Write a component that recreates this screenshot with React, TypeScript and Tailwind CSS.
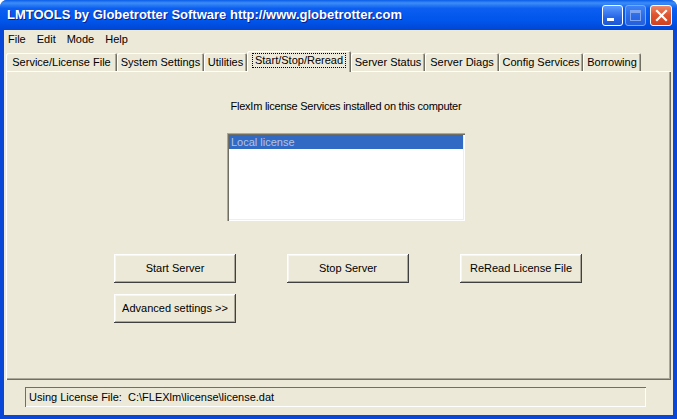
import React from "react";

const tabs = [
  { label: "Service/License File", w: "w-[111px]" },
  { label: "System Settings", w: "w-[87px]" },
  { label: "Utilities", w: "w-[43px]" },
  { label: "Start/Stop/Reread", w: "w-[104px]", active: true },
  { label: "Server Status", w: "w-[74px]" },
  { label: "Server Diags", w: "w-[74px]" },
  { label: "Config Services", w: "w-[84px]" },
  { label: "Borrowing", w: "w-[58px]" },
];

const btn =
  "w-[122px] h-[29px] flex items-center justify-center bg-[#ece9d8] text-[11px] text-black shadow-[inset_-1px_-1px_#404040,inset_1px_1px_#ffffff,inset_-2px_-2px_#aca899,inset_2px_2px_#f6f5ef]";

function TitleButtons() {
  return (
    <div className="flex items-center gap-[2px] mr-[5px]">
      <div className="w-[21px] h-[21px] rounded-[3px] border border-white bg-[linear-gradient(180deg,#5b9bff,#2766e6_60%,#1e57d6)] relative">
        <div className="absolute left-[4px] bottom-[4px] w-[7px] h-[3px] bg-white" />
      </div>
      <div className="w-[21px] h-[21px] rounded-[3px] border border-[#7fa6f0] bg-[linear-gradient(180deg,#3f83f5,#2a68e6_60%,#2560dc)] relative">
        <div className="absolute left-[4px] top-[4px] w-[11px] h-[11px] border border-[#7fa6f0] border-t-[3px]" />
      </div>
      <div className="w-[22px] h-[21px] ml-[2px] rounded-[3px] border border-white bg-[linear-gradient(180deg,#ee8a6a,#e0552f_45%,#cf4221)] flex items-center justify-center">
        <svg width="13" height="13" viewBox="0 0 13 13">
          <path d="M2 2 L11 11 M11 2 L2 11" stroke="white" strokeWidth="2.2" strokeLinecap="square" />
        </svg>
      </div>
    </div>
  );
}

export default function App() {
  return (
    <div
      className="w-[677px] h-[419px] flex flex-col bg-[#0847d8] rounded-t-[7px] overflow-hidden"
      style={{ fontFamily: '"Liberation Sans", Arial, sans-serif' }}
    >
      <div className="h-[30px] flex items-center justify-between bg-[linear-gradient(180deg,#0a5ee8_0%,#3d8cf7_10%,#0b5ef0_28%,#0055ea_70%,#0046d4_100%)]">
        <span className="ml-[7px] text-white font-bold text-[13px] [text-shadow:1px_1px_#0a1f8f]">
          LMTOOLS by Globetrotter Software http://www.globetrotter.com
        </span>
        <TitleButtons />
      </div>

      <div className="flex-1 mx-[4px] mb-[4px] bg-[#ece9d8] flex flex-col text-[11px] text-black">
        {/* menu */}
        <div className="h-[18px] flex items-center">
          {["File", "Edit", "Mode", "Help"].map((m) => (
            <span key={m} className="px-[4px] mr-[3px]">
              {m}
            </span>
          ))}
        </div>

        {/* tabs */}
        <div className="h-[23px] flex items-end pl-[2px] relative z-10">
          {tabs.map((t) =>
            t.active ? (
              <div
                key={t.label}
                className={`${t.w} h-[21px] -mb-[1px] flex items-start justify-center pt-[3px] bg-[#ece9d8] rounded-t-[2px] shadow-[inset_1px_1px_#ffffff,inset_-1px_0_#716f64,inset_-2px_0_#aca899]`}
              >
                <span className="px-[2px] leading-[13px] outline-1 outline-dotted outline-black">{t.label}</span>
              </div>
            ) : (
              <div
                key={t.label}
                className={`${t.w} h-[18px] flex items-center justify-center rounded-t-[2px] shadow-[inset_1px_1px_#ffffff,inset_-1px_0_#716f64,inset_-2px_0_#aca899]`}
              >
                {t.label}
              </div>
            )
          )}
        </div>

        {/* panel */}
        <div className="ml-[2px] w-[665px] h-[309px] shadow-[inset_1px_1px_#ffffff,inset_-1px_-1px_#716f64,inset_-2px_-2px_#aca899]">
          <div className="ml-[221px] w-[238px] pt-[28px] flex flex-col">
            <div className="h-[14px] leading-[14px] flex justify-center whitespace-nowrap tracking-[-0.25px]">
              FlexIm license Services installed on this computer
            </div>
            <div className="mt-[20px] h-[88px] bg-white p-[2px] shadow-[inset_1px_1px_#aca899,inset_2px_2px_#716f64,inset_-1px_-1px_#ffffff,inset_-2px_-2px_#f1efe2]">
              <div className="h-[14px] leading-[14px] bg-[#316ac5] text-[#b4c2e0] pl-[2px]">Local license</div>
            </div>
          </div>
          <div className="mt-[33px] ml-[108px] flex gap-[51px]">
            <div className={btn}>Start Server</div>
            <div className={btn}>Stop Server</div>
            <div className={btn}>ReRead License File</div>
          </div>
          <div className="mt-[11px] ml-[108px]">
            <div className={btn}>Advanced settings &gt;&gt;</div>
          </div>
        </div>

        {/* status */}
        <div className="mt-[7px] ml-[21px] w-[621px] h-[20px] flex items-center pl-[4px] shadow-[inset_1px_1px_#716f64,inset_-1px_-1px_#ffffff]">
          Using License File:&nbsp; C:\FLEXlm\license\license.dat
        </div>
      </div>
    </div>
  );
}
